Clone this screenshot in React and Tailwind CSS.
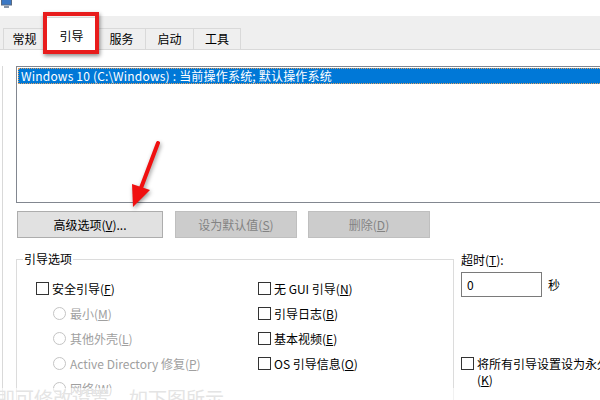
import React from "react";

const FONT = "font-['Noto_Sans_CJK_SC','Noto_Sans',sans-serif]";

function Cb({ children }) {
  return (
    <div className="flex items-center h-[25px]">
      <span className="w-[13px] h-[13px] border border-[#333333] bg-white shrink-0" />
      <span className="ml-[3px] text-[12px] leading-[16px] text-black whitespace-nowrap">{children}</span>
    </div>
  );
}

function Radio({ children }) {
  return (
    <div className="flex items-center h-[25px] pl-[17px]">
      <span className="w-[13px] h-[13px] rounded-full border border-[#c4c4c4] bg-white shrink-0" />
      <span className="ml-[4px] text-[12px] leading-[16px] text-[#a0a0a0] whitespace-nowrap">{children}</span>
    </div>
  );
}

function Tab({ children, w }) {
  return (
    <div className={`${w} h-[21px] border border-b-0 border-[#d9d9d9] -ml-px first:ml-0 flex items-center justify-center text-[12px] leading-[16px] text-black`}>
      {children}
    </div>
  );
}

export default function App() {
  return (
    <div className={`relative w-[600px] h-[400px] overflow-hidden bg-white ${FONT}`}>
      {/* title area */}
      <div className="h-[16px] relative">
        <svg className="absolute left-[1px] top-0" width="12" height="9" viewBox="0 0 12 9">
          <rect x="0.5" y="-3" width="10" height="8" fill="#3b78c4" stroke="#5a6a80" />
          <rect x="3" y="6" width="5" height="2" fill="#8a96a6" />
        </svg>
      </div>

      {/* tab strip */}
      <div className="h-[34px] bg-[#efefef] border-b border-[#d9d9d9] flex items-end pl-[3px]">
        <Tab w="w-[43px]">常规</Tab>
        <div className="w-[53px] h-[33px] -mb-px -ml-px bg-white border border-b-0 border-[#d9d9d9] flex items-start justify-center pt-[10px] text-[12px] leading-[16px] text-black">
          引导
        </div>
        <Tab w="w-[49px]">服务</Tab>
        <Tab w="w-[49px]">启动</Tab>
        <Tab w="w-[48px]">工具</Tab>
      </div>

      {/* panel */}
      <div className="ml-[2px] border-l border-[#d9d9d9] pl-[13px] h-[350px] w-[640px]">
        {/* list box */}
        <div className="mt-[16px] w-[620px] h-[137px] border border-[#828790] p-px">
          <div className="h-[16px] bg-[#0078d7] border border-dotted border-[#e0a060] pl-[2px] text-[12px] leading-[14px] text-white whitespace-nowrap tracking-[0.2px]">
            Windows 10 (C:\Windows) : 当前操作系统; 默认操作系统
          </div>
        </div>

        {/* buttons */}
        <div className="mt-[8px] flex items-center">
          <div className="ml-px w-[146px] h-[27px] bg-[#e1e1e1] border border-[#adadad] flex items-center justify-center text-[12px] text-black">
            高级选项(<u>V</u>)...
          </div>
          <div className="ml-[12px] w-[122px] h-[27px] bg-[#cccccc] border border-[#bfbfbf] flex items-center justify-center text-[12px] text-[#838383]">
            设为默认值(<u>S</u>)
          </div>
          <div className="ml-[11px] w-[122px] h-[27px] bg-[#cccccc] border border-[#bfbfbf] flex items-center justify-center text-[12px] text-[#838383]">
            删除(<u>D</u>)
          </div>
        </div>

        {/* lower section */}
        <div className="mt-[14px] flex items-start">
          <fieldset className="shrink-0 w-[438px] h-[200px] border border-[#dcdcdc] m-0 p-0">
            <legend className="ml-[6px] px-px text-[12px] leading-[14px] text-black">引导选项</legend>
            <div className="pt-[10px] pl-[19px] grid grid-cols-[222px_1fr]">
              <div className="flex flex-col">
                <Cb>安全引导(<u>F</u>)</Cb>
                <Radio>最小(<u>M</u>)</Radio>
                <Radio>其他外壳(<u>L</u>)</Radio>
                <Radio>Active Directory 修复(<u>P</u>)</Radio>
                <Radio>网络(<u>W</u>)</Radio>
              </div>
              <div className="flex flex-col">
                <Cb>无 GUI 引导(<u>N</u>)</Cb>
                <Cb>引导日志(<u>B</u>)</Cb>
                <Cb>基本视频(<u>E</u>)</Cb>
                <Cb>OS 引导信息(<u>O</u>)</Cb>
              </div>
            </div>
          </fieldset>

          <div className="shrink-0 ml-[7px] flex flex-col">
            <div className="text-[12px] leading-[16px] text-black">超时(<u>T</u>):</div>
            <div className="mt-[4px] flex items-center">
              <div className="w-[81px] h-[25px] border border-[#7a7a7a] pl-[5px] flex items-center text-[12px] text-black">0</div>
              <span className="ml-[6px] text-[12px] text-black">秒</span>
            </div>
            <div className="mt-[59px] flex items-start">
              <span className="mt-px w-[13px] h-[13px] border border-[#333333] bg-white shrink-0" />
              <span className="ml-[3px] w-[136px] text-[12px] leading-[16px] text-black">
                将所有引导设置设为永久(<u>K</u>)
              </span>
            </div>
          </div>
        </div>
      </div>

      {/* annotation: red box around tab */}
      <div className="absolute left-[43px] top-[12px] w-[56px] h-[42px] border-[4px] border-[#e81c1c] shadow-[1px_2px_4px_rgba(0,0,0,0.45)]" />

      {/* annotation: red arrow */}
      <svg className="absolute left-0 top-0 pointer-events-none" width="600" height="400" viewBox="0 0 600 400">
        <g style={{ filter: "drop-shadow(1px 2px 2px rgba(0,0,0,0.4))" }}>
          <line x1="158" y1="143" x2="141" y2="188" stroke="#f01010" strokeWidth="4" strokeLinecap="round" />
          <polygon points="133,207 132,184 150,190" fill="#f01010" />
        </g>
      </svg>

      {/* faded bottom caption */}
      <div className="absolute left-0 bottom-0 w-[600px] h-[12px] bg-white/60" />
      <div className="absolute left-[-4px] top-[387px] text-[19px] leading-[22px] text-[#e4e4e4] whitespace-nowrap">
        即可修改设置，如下图所示。
      </div>
    </div>
  );
}
